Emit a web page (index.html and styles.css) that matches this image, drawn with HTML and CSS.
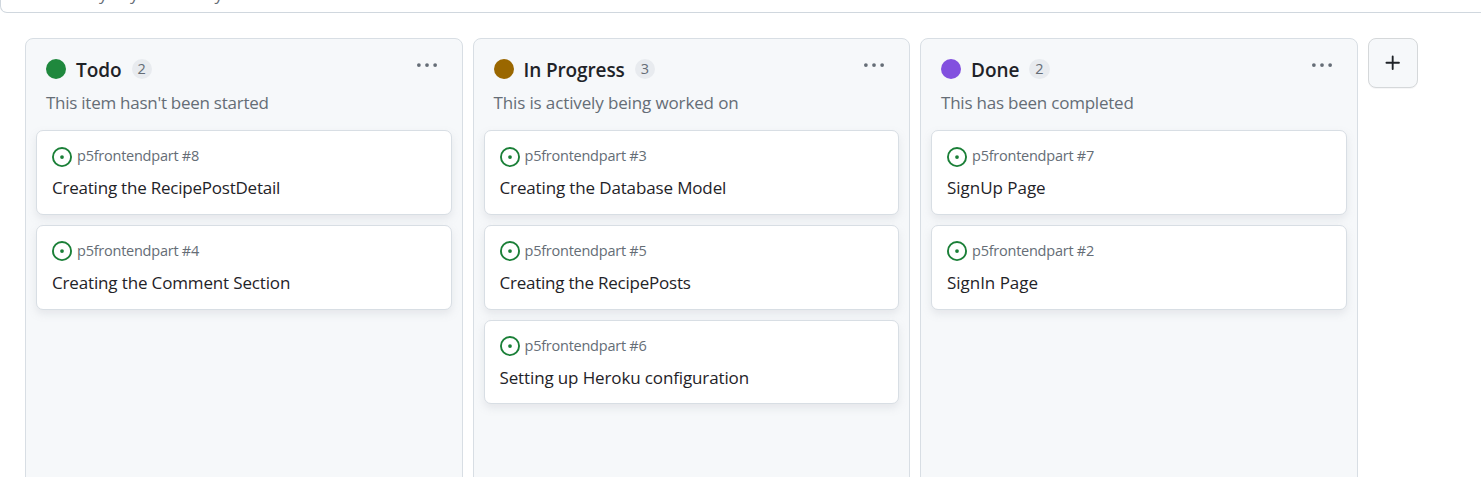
FILE: index.html
```html
<!DOCTYPE html>
<html lang="en">
<head>
<meta charset="utf-8">
<title>Project board</title>
<link rel="stylesheet" href="styles.css">
</head>
<body>
<svg class="defs" aria-hidden="true">
  <symbol id="issue" viewBox="0 0 16 16"><path d="M8 9.5a1.5 1.5 0 1 0 0-3 1.5 1.5 0 0 0 0 3Z"/><path d="M8 0a8 8 0 1 1 0 16A8 8 0 0 1 8 0ZM1.5 8a6.5 6.5 0 1 0 13 0 6.5 6.5 0 0 0-13 0Z"/></symbol>
  <symbol id="kebab" viewBox="0 0 16 16"><circle cx="1.5" cy="8" r="1.5"/><circle cx="8" cy="8" r="1.5"/><circle cx="14.5" cy="8" r="1.5"/></symbol>
</svg>
<div class="filter"><span>Filter by keyword or by field</span></div>
<main class="board">
  <section class="column">
    <header class="head"><span class="dot green"></span><h2>Todo</h2><span class="count">2</span><svg class="kebab"><use href="#kebab"/></svg></header>
    <p class="desc d-todo">This item hasn't been started</p>
    <div class="cards">
      <article class="card"><div class="ref"><svg><use href="#issue"/></svg><span>p5frontendpart #8</span></div><h3 class="c8">Creating the RecipePostDetail</h3></article>
      <article class="card second"><div class="ref"><svg><use href="#issue"/></svg><span>p5frontendpart #4</span></div><h3 class="c4">Creating the Comment Section</h3></article>
    </div>
  </section>
  <section class="column">
    <header class="head"><span class="dot amber"></span><h2 class="t-progress">In Progress</h2><span class="count">3</span><svg class="kebab"><use href="#kebab"/></svg></header>
    <p class="desc d-progress">This is actively being worked on</p>
    <div class="cards">
      <article class="card"><div class="ref"><svg><use href="#issue"/></svg><span>p5frontendpart #3</span></div><h3 class="c3">Creating the Database Model</h3></article>
      <article class="card second"><div class="ref"><svg><use href="#issue"/></svg><span>p5frontendpart #5</span></div><h3 class="c5">Creating the RecipePosts</h3></article>
      <article class="card last"><div class="ref"><svg><use href="#issue"/></svg><span>p5frontendpart #6</span></div><h3 class="c6">Setting up Heroku configuration</h3></article>
    </div>
  </section>
  <section class="column">
    <header class="head"><span class="dot purple"></span><h2>Done</h2><span class="count">2</span><svg class="kebab"><use href="#kebab"/></svg></header>
    <p class="desc d-done">This has been completed</p>
    <div class="cards">
      <article class="card"><div class="ref"><svg><use href="#issue"/></svg><span>p5frontendpart #7</span></div><h3 class="c7">SignUp Page</h3></article>
      <article class="card second"><div class="ref"><svg><use href="#issue"/></svg><span>p5frontendpart #2</span></div><h3 class="c2">SignIn Page</h3></article>
    </div>
  </section>
  <button class="add" aria-label="Add column"><svg viewBox="0 0 16 16"><path d="M7.75 2a.75.75 0 0 1 .75.75V7h4.25a.75.75 0 0 1 0 1.5H8.5v4.25a.75.75 0 0 1-1.5 0V8.5H2.75a.75.75 0 0 1 0-1.5H7V2.75A.75.75 0 0 1 7.75 2Z"/></svg></button>
</main>
</body>
</html>
```
FILE: styles.css
```css
* { box-sizing: border-box; }
body { margin: 0; height: 477px; overflow: hidden; background: #fff; color: #1f2328; font-family: "Segoe UI", "Open Sans", "Noto Sans", sans-serif; display: flex; flex-direction: column; }
.defs { display: none; }
.filter { height: 13px; width: 1500px; flex: none; overflow: hidden; border: 1px solid #d0d7de; border-top: 0; border-radius: 0 0 0 7px; padding-left: 44px; display: flex; align-items: flex-start; }
.filter span { font-size: 17px; line-height: 26px; letter-spacing: -0.1px; color: #656d76; margin-top: -19px; white-space: nowrap; }
.board { display: flex; gap: 10px; padding: 25px 0 0 25px; flex: none; }
.column { width: 437.5px; height: 460px; flex: none; border: 1px solid #d8dee4; border-radius: 8px; background: #f6f8fa; }
.head { display: flex; align-items: center; height: 30px; margin-top: 15px; padding: 0 25px 0 20px; }
.dot { width: 20px; height: 20px; border-radius: 50%; }
.green { background: #1f883d; }
.amber { background: #9a6700; }
.purple { background: #8250df; }
h2 { margin: 2px 10px 0; font-size: 19px; line-height: 28px; font-weight: 600; white-space: nowrap; letter-spacing: -0.05px; }
.t-progress { letter-spacing: -0.12px; }
.count { min-width: 20px; height: 20px; border-radius: 10px; padding: 0 6px; background: #e8ebef; color: #656d76; font-size: 14.5px; line-height: 20px; font-weight: 500; text-align: center; }
.kebab { width: 20px; height: 20px; margin: -9px 0 0 auto; fill: #656d76; }
.desc { margin: 6px 0 0 20px; font-size: 17px; line-height: 26px; color: #656d76; white-space: nowrap; }
.d-todo { letter-spacing: -0.26px; }
.d-progress { letter-spacing: -0.13px; }
.d-done { letter-spacing: -0.22px; }
.cards { display: flex; flex-direction: column; gap: 10px; padding: 14px 10px 0; }
.card { height: 85px; background: #fff; border: 1px solid #d8dee4; border-radius: 7px; padding: 15px; box-shadow: 0 4px 8px rgba(140, 149, 159, .17); }
.last { height: 84px; }
.ref { display: flex; gap: 5px; height: 20px; color: #656d76; font-size: 14.5px; line-height: 20px; white-space: nowrap; letter-spacing: -0.24px; }
.ref svg { width: 20px; height: 20px; margin-top: 1px; fill: #1a7f37; flex: none; }
.second .ref svg, .last .ref svg { margin-top: 0; }
h3 { margin: 9px 0 0; font-size: 17px; line-height: 26px; font-weight: 400; white-space: nowrap; }
.c8 { letter-spacing: -0.22px; }
.c4 { letter-spacing: -0.15px; }
.c3 { letter-spacing: -0.14px; }
.c5 { letter-spacing: -0.23px; }
.c6 { letter-spacing: -0.13px; }
.c7, .c2 { letter-spacing: -0.03px; }
.add { width: 50px; height: 50px; flex: none; padding: 0; border: 1px solid #d5d8da; border-radius: 8px; background: #f6f8fa; display: flex; align-items: center; justify-content: center; box-shadow: 0 1px 0 rgba(31, 35, 40, .04); }
.add svg { width: 20px; height: 20px; fill: #1f2328; }
```
